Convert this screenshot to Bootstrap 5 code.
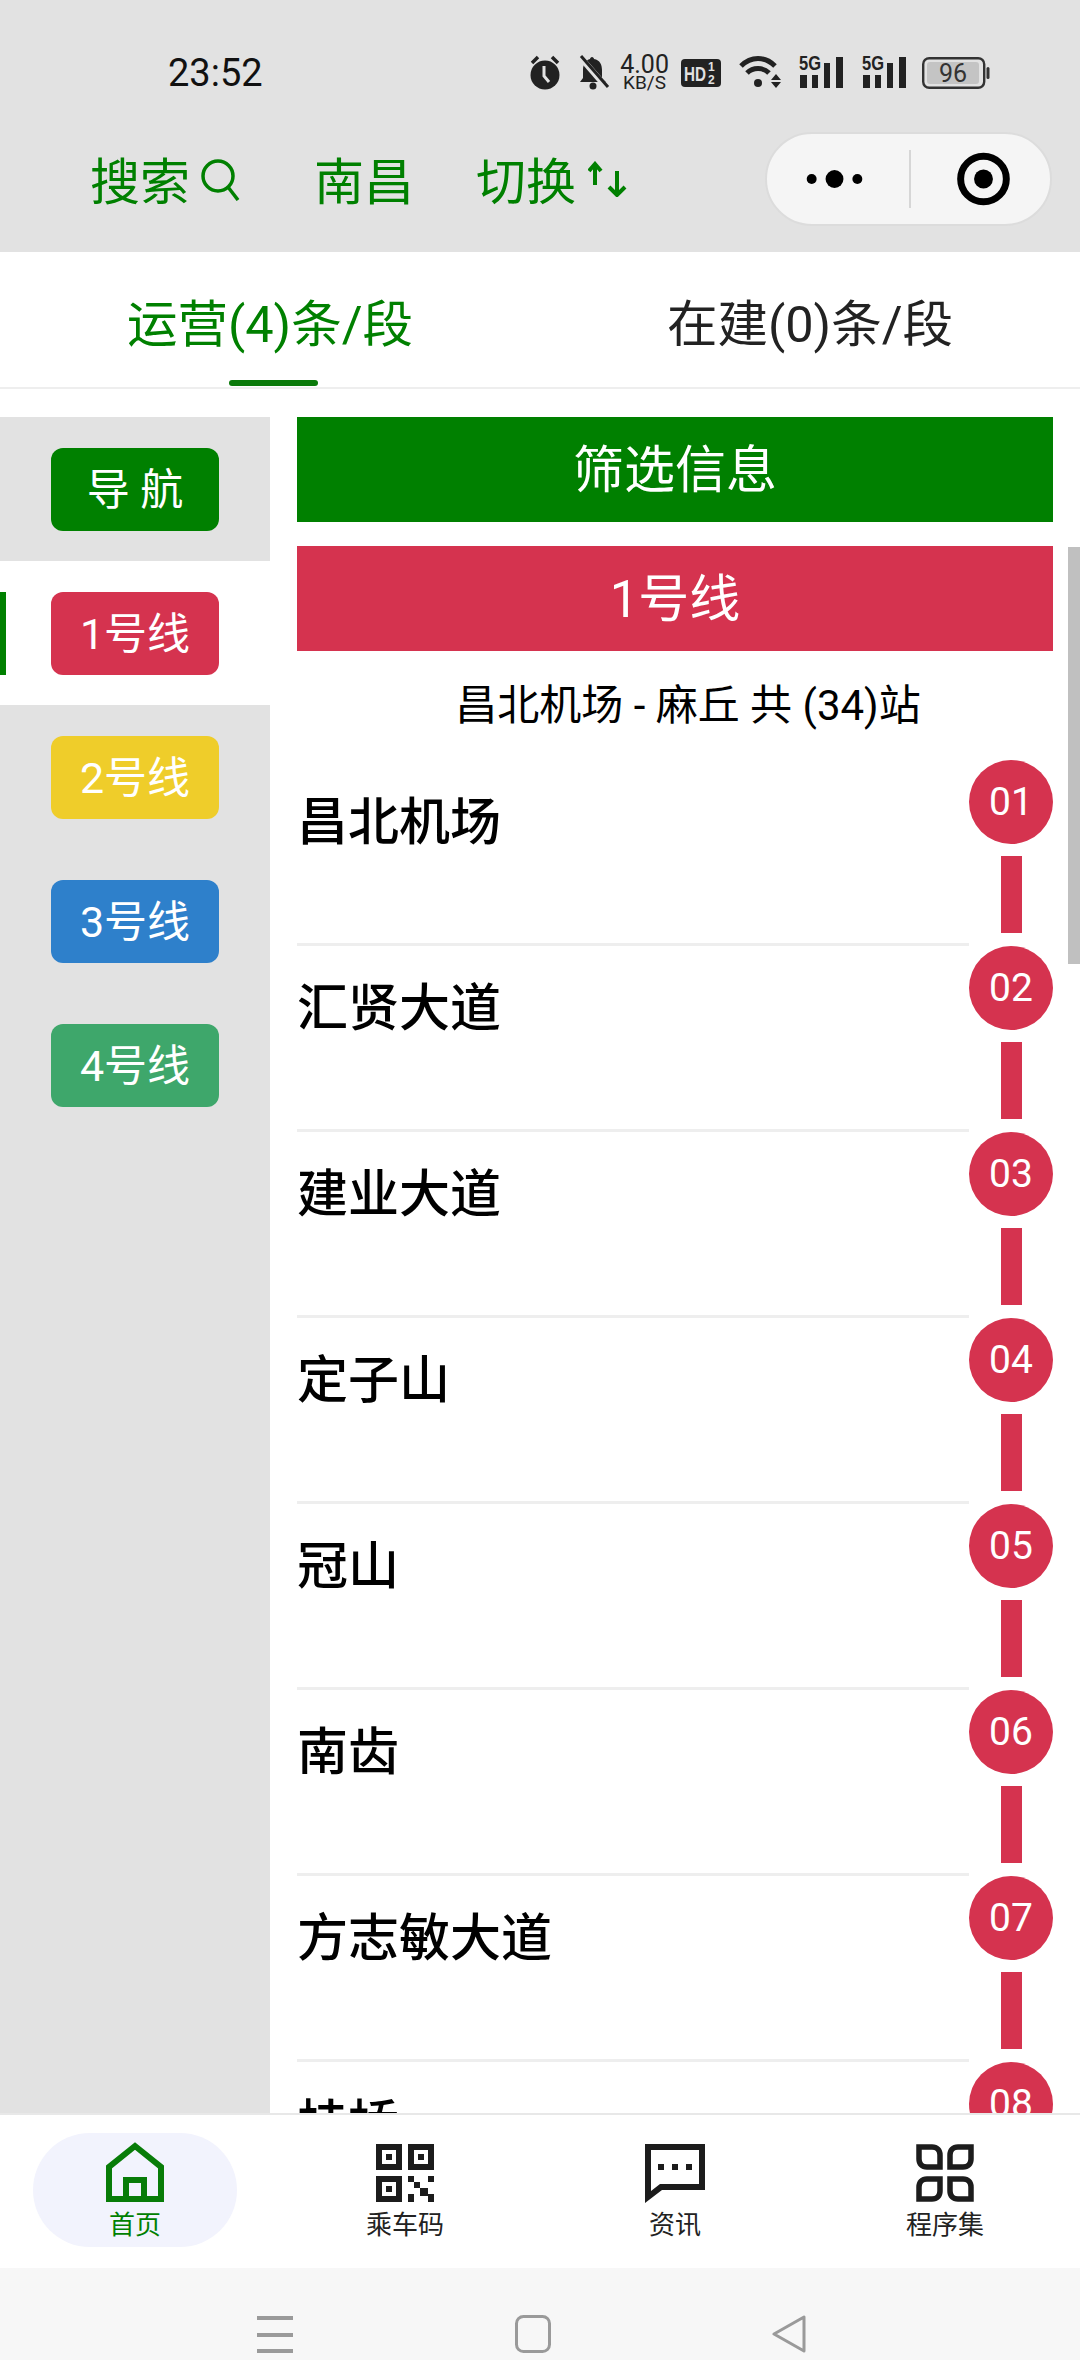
<!DOCTYPE html>
<html lang="zh-CN">
<head>
  <meta charset="UTF-8">
  <title>南昌地铁</title>
  <link href="https://cdn.jsdelivr.net/npm/bootstrap@5.3.0/dist/css/bootstrap.min.css" rel="stylesheet">
  <style>
    html, body { width: 1080px; height: 2360px; overflow: hidden; }
    body { font-family: Roboto, "Noto Sans CJK SC", sans-serif; background: #fff; color: #000; }
    .app-shell { width: 1080px; height: 2360px; }

    /* top bar */
    .top-area { background: #e2e2e2; height: 252px; flex: none; }
    .status-row { height: 132px; padding: 55px 90px 0 168px; }
    .status-row svg { overflow: visible; }
    .clock { font-size: 38px; line-height: 36px; color: #111; width: 362px; }
    .net-speed { width: 51px; margin: 0 11px 0 10px; color: #222; text-align: center; }
    .net-speed div:first-child { font-size: 25px; line-height: 20px; }
    .net-speed div:last-child { font-size: 19px; line-height: 16px; }
    .nav-row { padding-left: 90px; padding-right: 28px; height: 94px; }
    .nav-link-txt { color: #008000; font-size: 50px; line-height: 60px; margin-top: 7px; white-space: nowrap; }
    .capsule { width: 287px; height: 94px; margin-left: auto; background: #f5f5f5; border: 2px solid #dcdcdc; border-radius: 47px; }
    .capsule-sep { width: 2px; height: 58px; background: #d6d6d6; }

    /* tabs */
    .tab-row { height: 137px; flex: none; border-bottom: 2px solid #eee; }
    .line-tab { width: 540px; font-size: 50.5px; line-height: 60px; padding-top: 43px; color: #222; text-align: center; position: relative; }
    .line-tab.is-on { color: #008000; }
    .line-tab.is-on::after { content: ""; position: absolute; left: 229px; bottom: 1px; width: 89px; height: 6px; background: #0a7a0a; border-radius: 3px; }

    /* body */
    .main-area { flex: 1 1 0; min-height: 0; overflow: hidden; padding-top: 28px; position: relative; }
    .side-rail { width: 270px; flex: none; background: #e2e2e2; }
    .rail-item { height: 144px; padding: 31px 51px 0; position: relative; }
    .rail-item.is-on { background: #fff; }
    .rail-item.is-on::before { content: ""; position: absolute; left: 0; top: 31px; width: 6px; height: 83px; background: #008000; }
    .rail-btn { height: 83px; border-radius: 12px; color: #fff; font-size: 43px; line-height: 85px; text-align: center; white-space: nowrap; }
    .bg-nav { background: #008000; }
    .bg-l1 { background: #d5334f; }
    .bg-l2 { background: #efcd2a; }
    .bg-l3 { background: #2e80cb; }
    .bg-l4 { background: #3ea76b; }
    .content-col { padding: 0 27px; min-width: 0; }
    .head-bar { height: 105px; color: #fff; font-size: 51px; line-height: 108px; text-align: center; }
    .route-txt { height: 109px; font-size: 42px; line-height: 50px; padding: 30px 0 0 26px; text-align: center; white-space: nowrap; }
    .stn-row { height: 186px; }
    .stn-name { border-bottom: 3px solid #eee; font-size: 51px; font-weight: 500; line-height: 60px; padding-top: 33px; overflow: hidden; }
    .stn-side { width: 84px; flex: none; }
    .stn-dot { width: 84px; height: 84px; border-radius: 50%; background: #d5334f; color: #fff; font-size: 39px; line-height: 84px; text-align: center; flex: none; }
    .stn-link { width: 21px; height: 77px; margin-top: 12px; background: #d5334f; flex: none; }
    .scroll-thumb { position: absolute; right: 0; top: 158px; width: 12px; height: 417px; background: #c0c0c0; }

    /* bottom tabs */
    .bottom-tabs { height: 155px; flex: none; border-top: 2px solid #e8e8e8; background: #fff; padding: 18px 0 0 0; }
    .tab-cell { width: 270px; color: #222; font-size: 26px; line-height: 32px; text-align: center; }
    .tab-cell.is-on { color: #008000; }
    .tab-cell svg { display: block; margin: 0 auto 7px; }
    .tab-cell svg.chat-ico { margin-bottom: 5px; }
    .tab-pill { width: 204px; height: 114px; margin: 0 auto; padding-top: 11px; border-radius: 57px; }
    .tab-pill.is-on { background: #f2f3fd; padding-top: 9px; }
    .sys-bar { height: 92px; flex: none; background: #f7f7f7; padding-top: 47px; padding-left: 255px; gap: 220px; }
  </style>
</head>
<body>
  <div class="app-shell d-flex flex-column">

    <div class="top-area">
      <div class="status-row d-flex align-items-start">
        <div class="clock">23:52</div>
        <!-- 闹钟 -->
        <svg width="32" height="35" viewBox="0 0 32 35" fill="#222"><circle cx="16" cy="20" r="14.5"/><path d="M3 8 9 2M29 8 23 2" stroke="#222" stroke-width="3.5" fill="none"/><path d="M15 11v10l5 6" stroke="#e2e2e2" stroke-width="3" fill="none"/></svg>
        <!-- 静音 -->
        <svg width="31" height="35" viewBox="0 0 31 35" fill="#222" style="margin-left:17px"><path d="M14 2c1 0 2 1 2 2 6 1 8 6 8 11v8l4 4H2l3-4v-8c0-6 3-10 7-11 0-1 1-2 2-2z"/><circle cx="15" cy="31" r="3.5"/><path d="M3 3 29 33" stroke="#e2e2e2" stroke-width="6"/><path d="M3 1 30 32" stroke="#222" stroke-width="3"/></svg>
        <div class="net-speed"><div>4.00</div><div>KB/S</div></div>
        <!-- HD -->
        <svg width="40" height="28" viewBox="0 0 40 28" style="margin-top:4px"><rect width="40" height="28" rx="4" fill="#222"/><text x="3" y="22" font-family="Liberation Sans" font-size="20" font-weight="700" fill="#e2e2e2" textLength="22" lengthAdjust="spacingAndGlyphs">HD</text><text x="27" y="12" font-family="Liberation Sans" font-size="12" font-weight="700" fill="#e2e2e2">1</text><text x="27" y="25" font-family="Liberation Sans" font-size="12" font-weight="700" fill="#e2e2e2">2</text></svg>
        <!-- wifi -->
        <svg width="45" height="33" viewBox="0 0 45 33" style="margin-left:18px" fill="none" stroke="#222" stroke-width="5"><path d="M2 11C12 1 26 1 36 11"/><path d="M8 18C14 12 24 12 30 18"/><circle cx="19" cy="28" r="4" fill="#222" stroke="none"/><path d="M37 19l5 6h-10zM37 33l5-6h-10z" fill="#222" stroke="none"/></svg>
        <!-- 5G 信号 -->
        <svg width="47" height="33" viewBox="0 0 47 33" style="margin-left:13px" fill="#222"><text x="2" y="15" font-family="Liberation Sans" font-size="20" font-weight="700" textLength="22" lengthAdjust="spacingAndGlyphs">5G</text><rect x="3" y="20" width="7" height="13"/><rect x="15" y="20" width="6" height="13"/><rect x="27" y="8" width="6" height="25"/><rect x="39" y="2" width="7" height="31"/></svg>
        <svg width="47" height="33" viewBox="0 0 47 33" style="margin-left:16px" fill="#222"><text x="2" y="15" font-family="Liberation Sans" font-size="20" font-weight="700" textLength="22" lengthAdjust="spacingAndGlyphs">5G</text><rect x="3" y="20" width="7" height="13"/><rect x="15" y="20" width="6" height="13"/><rect x="27" y="8" width="6" height="25"/><rect x="39" y="2" width="7" height="31"/></svg>
        <!-- 电池 -->
        <svg width="68" height="32" viewBox="0 0 68 32" style="margin-left:15px;margin-top:2px"><rect x="1.2" y="1.2" width="61" height="29.6" rx="6" fill="none" stroke="#333" stroke-width="2.4"/><rect x="5" y="5" width="52" height="22" rx="3" fill="#c4c4c4"/><rect x="64.5" y="10" width="3" height="12" rx="1.5" fill="#333"/><text x="31" y="25" text-anchor="middle" font-family="Roboto" font-size="25" fill="#333">96</text></svg>
      </div>
      <div class="nav-row d-flex align-items-center">
        <span class="nav-link-txt">搜索</span>
        <svg width="40" height="42" viewBox="0 0 40 42" fill="none" stroke="#008000" stroke-width="3.5" style="margin-left:10px;margin-top:2px"><circle cx="18" cy="17" r="15"/><path d="M28 28 38 41"/></svg>
        <span class="nav-link-txt" style="margin-left:74px">南昌</span>
        <span class="nav-link-txt" style="margin-left:62px">切换</span>
        <svg width="40" height="36" viewBox="0 0 40 36" fill="none" stroke="#008000" stroke-width="4" style="margin-left:12px"><path d="M7 24V3M1 10l6-7 6 7"/><path d="M29 10v24M21 26l8 8 8-8"/></svg>
        <div class="capsule d-flex align-items-center">
          <svg width="143" height="30" viewBox="0 0 143 30"><circle cx="45" cy="15" r="5"/><circle cx="68" cy="15" r="9"/><circle cx="91" cy="15" r="5"/></svg>
          <div class="capsule-sep"></div>
          <svg width="140" height="60" viewBox="0 0 140 60" fill="none"><circle cx="73" cy="30" r="23" stroke="#000" stroke-width="7"/><circle cx="73" cy="30" r="9.5" fill="#000"/></svg>
        </div>
      </div>
    </div>

    <div class="tab-row d-flex">
      <div class="line-tab is-on">运营(4)条/段</div>
      <div class="line-tab">在建(0)条/段</div>
    </div>

    <div class="main-area d-flex">
      <div class="side-rail">
        <div class="rail-item"><div class="rail-btn bg-nav">导 航</div></div>
        <div class="rail-item is-on"><div class="rail-btn bg-l1">1号线</div></div>
        <div class="rail-item"><div class="rail-btn bg-l2">2号线</div></div>
        <div class="rail-item"><div class="rail-btn bg-l3">3号线</div></div>
        <div class="rail-item"><div class="rail-btn bg-l4">4号线</div></div>
      </div>
      <div class="content-col flex-grow-1">
        <div class="head-bar bg-nav mb-4">筛选信息</div>
        <div class="head-bar bg-l1">1号线</div>
        <div class="route-txt">昌北机场 - 麻丘 共 (34)站</div>
        <div class="stn-row d-flex"><div class="stn-name flex-grow-1">昌北机场</div><div class="stn-side d-flex flex-column align-items-center"><div class="stn-dot">01</div><div class="stn-link"></div></div></div>
        <div class="stn-row d-flex"><div class="stn-name flex-grow-1">汇贤大道</div><div class="stn-side d-flex flex-column align-items-center"><div class="stn-dot">02</div><div class="stn-link"></div></div></div>
        <div class="stn-row d-flex"><div class="stn-name flex-grow-1">建业大道</div><div class="stn-side d-flex flex-column align-items-center"><div class="stn-dot">03</div><div class="stn-link"></div></div></div>
        <div class="stn-row d-flex"><div class="stn-name flex-grow-1">定子山</div><div class="stn-side d-flex flex-column align-items-center"><div class="stn-dot">04</div><div class="stn-link"></div></div></div>
        <div class="stn-row d-flex"><div class="stn-name flex-grow-1">冠山</div><div class="stn-side d-flex flex-column align-items-center"><div class="stn-dot">05</div><div class="stn-link"></div></div></div>
        <div class="stn-row d-flex"><div class="stn-name flex-grow-1">南齿</div><div class="stn-side d-flex flex-column align-items-center"><div class="stn-dot">06</div><div class="stn-link"></div></div></div>
        <div class="stn-row d-flex"><div class="stn-name flex-grow-1">方志敏大道</div><div class="stn-side d-flex flex-column align-items-center"><div class="stn-dot">07</div><div class="stn-link"></div></div></div>
        <div class="stn-row d-flex"><div class="stn-name flex-grow-1">桂桥</div><div class="stn-side d-flex flex-column align-items-center"><div class="stn-dot">08</div><div class="stn-link"></div></div></div>
      </div>
      <div class="scroll-thumb"></div>
    </div>

    <div class="bottom-tabs d-flex">
      <div class="tab-cell is-on">
        <div class="tab-pill is-on">
          <svg width="58" height="60" viewBox="0 0 58 60" fill="none" stroke="#087c08" stroke-width="6"><path d="M3 57V25L29 4l26 21v32z"/><path d="M20 57V38h18v19"/></svg>
          首页
        </div>
      </div>
      <div class="tab-cell">
        <div class="tab-pill">
          <svg width="58" height="58" viewBox="0 0 58 58" fill="#1c1c1c"><path fill-rule="evenodd" d="M0 0h26v26H0zM6 6v14h14V6zM32 0h26v26H32zM38 6v14h14V6zM0 32h26v26H0zM6 38v14h14V38z"/><path d="M10 10h6v6h-6zM42 10h6v6h-6zM10 42h6v6h-6zM32 32h6v6h-6zM52 32h6v6h-6zM38 38h6v6h-6zM44 44h8v8h-8zM52 50h6v8h-6zM32 50h6v8h-6z"/></svg>
          乘车码
        </div>
      </div>
      <div class="tab-cell">
        <div class="tab-pill">
          <svg width="60" height="60" viewBox="0 0 60 60" fill="#1c1c1c" class="chat-ico"><path fill-rule="evenodd" d="M0 0h60v46H17L0 59zM6 6v41l9-7h39V6z"/><path d="M13 20h6v6h-6zM27 20h6v6h-6zM41 20h6v6h-6z"/></svg>
          资讯
        </div>
      </div>
      <div class="tab-cell">
        <div class="tab-pill">
          <svg width="58" height="58" viewBox="0 0 58 58" fill="none" stroke="#1c1c1c" stroke-width="5.5"><path d="M3 3h13c5 0 8 3 8 8v12H11c-5 0-8-3-8-8z"/><path d="M55 3H42c-5 0-8 3-8 8v12h13c5 0 8-3 8-8z"/><path d="M3 55V43c0-5 3-8 8-8h13v12c0 5-3 8-8 8z"/><path d="M55 55H42c-5 0-8-3-8-8V35h13c5 0 8 3 8 8z"/></svg>
          程序集
        </div>
      </div>
    </div>

    <div class="sys-bar d-flex align-items-start">
      <svg width="40" height="40" viewBox="0 0 40 40" fill="#9a9a9a"><rect x="2" y="1" width="36" height="4"/><rect x="2" y="18" width="36" height="4"/><rect x="2" y="34" width="36" height="4"/></svg>
      <svg width="36" height="38" viewBox="0 0 36 38" fill="none" stroke="#9a9a9a" stroke-width="3"><rect x="1.5" y="1.5" width="33" height="35" rx="7"/></svg>
      <svg width="38" height="38" viewBox="0 0 38 38" fill="none" stroke="#9a9a9a" stroke-width="3" stroke-linejoin="round"><path d="M33 2v34L3 19z"/></svg>
    </div>

  </div>
  <script src="https://cdn.jsdelivr.net/npm/bootstrap@5.3.0/dist/js/bootstrap.bundle.min.js"></script>
</body>
</html>
